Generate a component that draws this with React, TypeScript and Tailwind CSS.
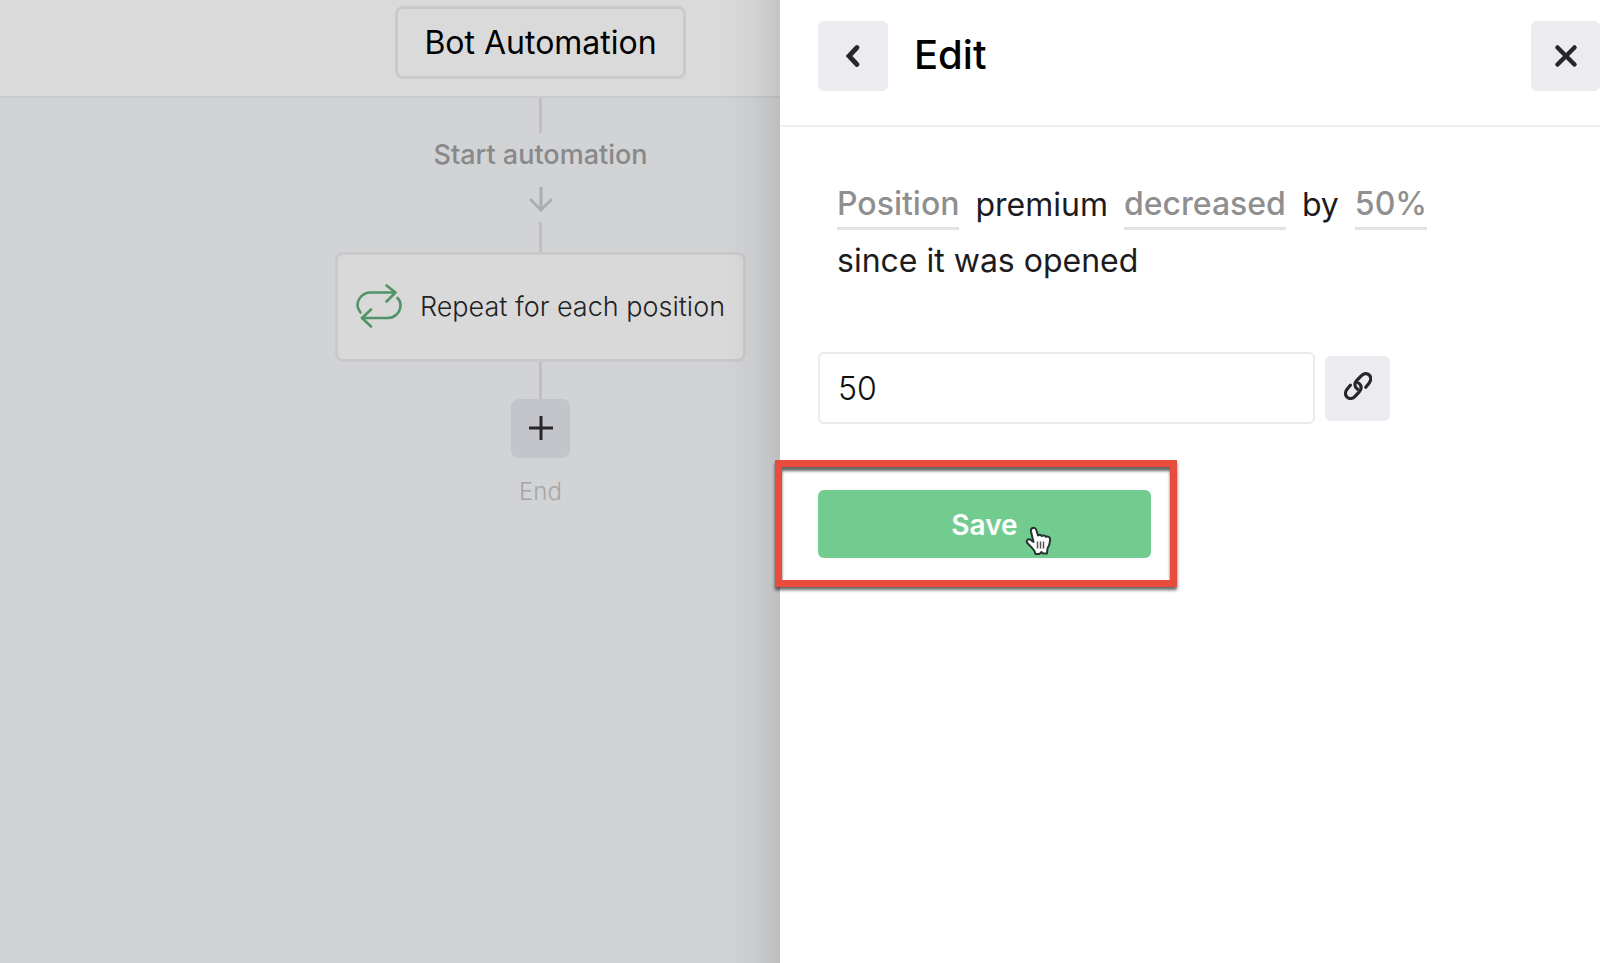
/**
 * Automation editor: the flow canvas sits dimmed on the left, the edit
 * drawer is open on the right.
 */

type SentencePart = { text: string; editable?: boolean };

const SENTENCE: SentencePart[] = [
  { text: "Position", editable: true },
  { text: "premium" },
  { text: "decreased", editable: true },
  { text: "by" },
  { text: "50%", editable: true },
];

function Connector({ className }: { className: string }) {
  return <div aria-hidden className={`w-[3px] bg-[#c0c0c2] ${className}`} />;
}

function ArrowDownIcon() {
  return (
    <svg width="24" height="26" viewBox="0 0 24 26" fill="none" stroke="#acadaf" strokeWidth="3" aria-hidden>
      <path d="M12 0v23M1 12l11 11 11-11" />
    </svg>
  );
}

function RepeatIcon() {
  return (
    <svg
      width="46"
      height="46"
      viewBox="0 0 46 46"
      fill="none"
      stroke="#529467"
      strokeWidth="2.6"
      strokeLinecap="round"
      strokeLinejoin="round"
      className="shrink-0"
      aria-hidden
    >
      <path d="M4.5 28.500C2.500 26 1.500 24 1.500 21.500C1.500 14 8 8.500 14 8.500H39" />
      <path d="M30.500 1.500L39.500 8.500L30.500 17.500" />
      <path d="M41.500 14C43.500 16 44.500 18.500 44.500 21C44.500 29 38 34 32 34H6" />
      <path d="M15 25.500L6 34l9 8.500" />
    </svg>
  );
}

function PlusIcon() {
  return (
    <svg width="24" height="24" viewBox="0 0 24 24" stroke="#26272b" strokeWidth="3" aria-hidden>
      <path d="M12 0v24M0 12h24" />
    </svg>
  );
}

function BackIcon() {
  return (
    <svg
      width="16"
      height="24"
      viewBox="0 0 16 24"
      fill="none"
      stroke="#26272b"
      strokeWidth="4.8"
      strokeLinecap="round"
      aria-hidden
    >
      <path d="M12 3.500L4 12l8 8.500" />
    </svg>
  );
}

function CloseIcon() {
  return (
    <svg width="24" height="24" viewBox="0 0 24 24" stroke="#26272b" strokeWidth="4.500" strokeLinecap="round" aria-hidden>
      <path d="M3.500 3.500l17 17M20.500 3.500l-17 17" />
    </svg>
  );
}

function LinkIcon() {
  return (
    <svg
      width="28"
      height="28"
      viewBox="0 0 28 28"
      fill="none"
      stroke="#26272b"
      strokeWidth="3.200"
      strokeLinecap="round"
      aria-hidden
    >
      <path d="M13.500 17.200C9.800 14.500 10.500 10.800 13 8.200L17.200 3.800C19.800 1.200 23.300 1 25.300 3.200C27.300 5.400 27 8.800 25 11.200L21.800 15.200" />
      <path d="M14.500 11C18.200 13.500 17.600 17.200 15.200 19.900L11 24.400C8.500 27 5 27.200 2.900 25C.900 22.800 1.200 19.400 3.200 17L6.400 13.200" />
    </svg>
  );
}

function HandCursor() {
  return (
    <svg
      width="27"
      height="30"
      viewBox="0 0 27 30"
      className="absolute left-[207px] top-[36px] pointer-events-none"
      aria-hidden
    >
      <path
        d="M7.500 2C9.500 1.200 11 2.500 11.500 4.500L13 9.500C14.500 8.500 16 8.800 17 10C18.500 9 20 9.500 20.800 10.800C22.800 9.800 25.300 11 25.200 13.500C25 17 24.500 19.500 22.500 22.500L22 27.500H18L16.500 26L14.500 28H10.500L9.500 25C7.500 22 4.500 19.500 2 16.500C1 14.500 3 12.500 5 13.500L8.500 16L6 5.500C5.700 4 6 2.700 7.500 2Z"
        fill="#fff"
        stroke="#26352c"
        strokeWidth="2"
        strokeLinejoin="round"
      />
      <path d="M12.500 15.500v7M15.500 15.500v7M18.500 15.500v7" stroke="#555" strokeWidth="1.500" />
    </svg>
  );
}

function FlowCanvas() {
  return (
    <main className="relative flex-[39] min-w-0 flex flex-col bg-[#d2d3d5]">
      <header className="flex justify-center pt-1.5 pb-[17px] pl-[301px] bg-[#dadada] border-b-2 border-[#c9cacc]">
        <h1 className="h-[73px] px-[26px] flex items-center whitespace-nowrap rounded-lg border-[3px] border-[#cacaca] text-[32px] text-black">
          Bot Automation
        </h1>
      </header>

      <div className="flex flex-col items-center pl-[301px]">
        <Connector className="h-[35px]" />
        <p className="mt-1 h-9 flex items-center text-[27px] font-medium text-[#88898b]">Start automation</p>
        <div className="mt-[14px] mb-[9px]">
          <ArrowDownIcon />
        </div>
        <Connector className="h-[30px]" />
        <div className="h-[110px] px-[18px] flex items-center gap-[18px] rounded-lg border-[3px] border-[#c9c8cb] bg-[#d9d9d9]">
          <RepeatIcon />
          <span className="whitespace-nowrap text-[27px] font-light text-[#222325]">Repeat for each position</span>
        </div>
        <Connector className="h-[37px]" />
        <button
          type="button"
          aria-label="Add step"
          className="size-[59px] pb-0.5 flex items-center justify-center rounded-lg bg-[#c4c5ca]"
        >
          <PlusIcon />
        </button>
        <p className="mt-4 h-9 flex items-center text-2xl font-light text-[#a5a6a8]">End</p>
      </div>

      {/* shade cast by the drawer */}
      <div
        aria-hidden
        className="absolute inset-y-0 right-0 w-14 bg-linear-to-r from-transparent via-black/3 to-black/10"
      />
    </main>
  );
}

function EditDrawer() {
  return (
    <aside className="relative flex-[41] min-w-0 bg-white" aria-label="Edit">
      <header className="flex items-center h-[127px] pb-[14px] pl-[38px] border-b-2 border-[#efeff1]">
        <button
          type="button"
          aria-label="Back"
          className="size-[70px] flex items-center justify-center rounded-md bg-[#ebebf0]"
        >
          <BackIcon />
        </button>
        <h2 className="ml-[26px] pb-0.5 text-[40px] leading-[48px] font-medium text-black">Edit</h2>
        <button
          type="button"
          aria-label="Close"
          className="ml-auto h-[70px] w-[69px] flex items-center justify-center rounded-md bg-[#ebebf0]"
        >
          <CloseIcon />
        </button>
      </header>

      <form className="px-[38px]" onSubmit={(e) => e.preventDefault()}>
        <div className="mt-[53px] px-[19px] text-[32px] leading-[50px] text-[#1c1c1e]">
          <p className="flex flex-wrap gap-x-4">
            {SENTENCE.map((part) =>
              part.editable ? (
                <button
                  key={part.text}
                  type="button"
                  className="border-b-[3px] border-[#e3e3e3] font-medium leading-[46px] text-[#8f8f8f]"
                >
                  {part.text}
                </button>
              ) : (
                <span key={part.text}>{part.text}</span>
              ),
            )}
          </p>
          <p className="mt-[6px]">since it was opened</p>
        </div>

        <div className="mt-[66px] flex items-center gap-[10px]">
          <input
            type="text"
            aria-label="Percent"
            defaultValue="50"
            className="h-[72px] w-[497px] px-[18px] rounded-md border-2 border-[#ebebeb] text-[32px] font-light text-[#0d0d0e] outline-none"
          />
          <button
            type="button"
            aria-label="Link value"
            className="size-[65px] pb-1 flex items-center justify-center rounded-md bg-[#ebebf0]"
          >
            <LinkIcon />
          </button>
        </div>

        <div className="relative mt-[66px] w-[333px]">
          <button
            type="submit"
            className="h-[68px] w-full pt-0.5 rounded-md bg-[#72cb8f] text-[28px] font-semibold text-white"
          >
            Save
          </button>
          <HandCursor />
          {/* callout frame */}
          <div
            aria-hidden
            className="absolute -left-[43px] -right-[26px] -top-[30px] -bottom-[29px] border-[7px] border-[#e84c3c] shadow-[0_3px_3px_rgba(0,0,0,0.6),inset_0_4px_3px_rgba(0,0,0,0.6)] pointer-events-none"
          />
        </div>
      </form>
    </aside>
  );
}

export default function App() {
  return (
    <div className="flex min-h-screen font-[Inter,'Open_Sans',sans-serif]">
      <FlowCanvas />
      <EditDrawer />
    </div>
  );
}
